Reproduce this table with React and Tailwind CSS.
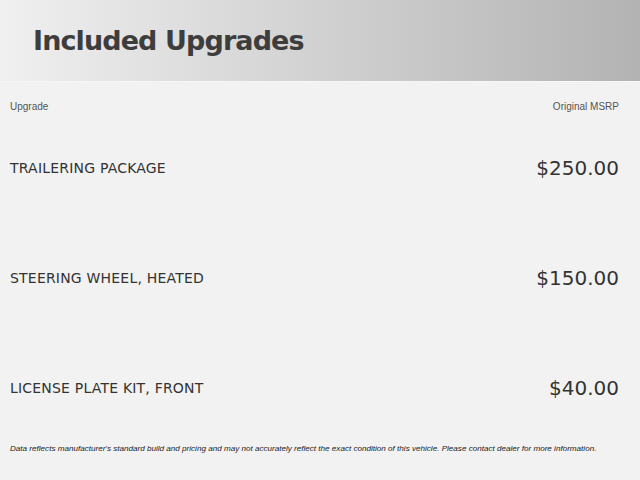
export default function App() {
  const rows = [
    ["TRAILERING PACKAGE", "$250.00"],
    ["STEERING WHEEL, HEATED", "$150.00"],
    ["LICENSE PLATE KIT, FRONT", "$40.00"],
  ];
  return (
    <div className="w-[640px] h-[480px] bg-[#f2f2f2] overflow-hidden flex flex-col">
      <div className="h-[82px] shrink-0 bg-gradient-to-r from-[#f0f0f0] to-[#b3b3b3] flex items-center pl-[33px] border-b border-[#f7f7f7]">
        <h1 className="text-[27px] font-bold text-[#3d3d3d] tracking-[-0.9px] leading-none" style={{ fontFamily: '"DejaVu Sans", sans-serif' }}>
          Included Upgrades
        </h1>
      </div>
      <div className="flex flex-col pl-[10px] pr-[21px]">
        <div className="flex justify-between h-[31px] pt-[19px] leading-[12px] text-[10px] text-[#555]" style={{ fontFamily: '"Liberation Sans", Arial, sans-serif' }}>
          <span>Upgrade</span>
          <span>Original MSRP</span>
        </div>
        {rows.map(([name, price], i) => (
          <div key={i} className="flex justify-between items-center h-[110px] text-[#333]" style={{ fontFamily: '"DejaVu Sans", sans-serif' }}>
            <span className="text-[14px] tracking-[0.2px]">{name}</span>
            <span className="text-[20px]">{price}</span>
          </div>
        ))}
        <p className="text-[8.1px] leading-[12px] italic text-[#1a1a1a] whitespace-nowrap" style={{ fontFamily: '"Liberation Sans", Arial, sans-serif' }}>
          Data reflects manufacturer's standard build and pricing and may not accurately reflect the exact condition of this vehicle. Please contact dealer for more information.
        </p>
      </div>
    </div>
  );
}
